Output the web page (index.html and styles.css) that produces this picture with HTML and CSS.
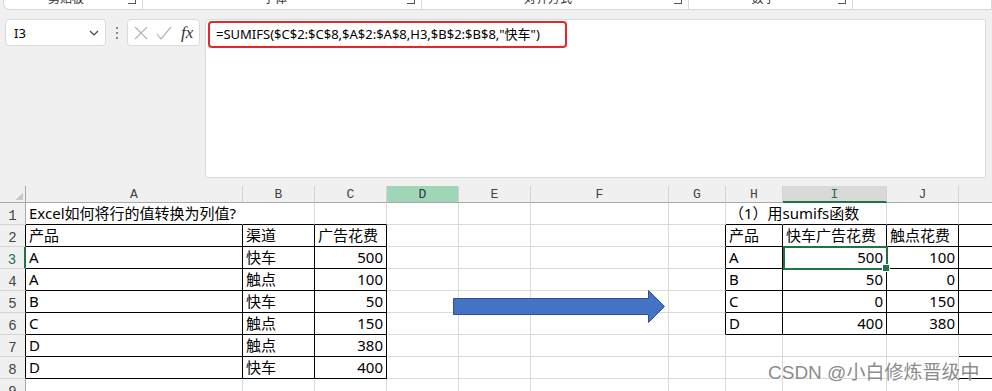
FILE: index.html
```html
<!DOCTYPE html>
<html lang="zh-CN">
<head>
    <meta charset="UTF-8">
    <meta name="viewport" content="width=device-width, initial-scale=1.0">
    <title>Excel - SUMIFS</title>
    <link rel="stylesheet" href="styles.css">
</head>
<body>

    <!-- Ribbon (only the bottom edge is on screen) -->
    <div class="ribbon">
        <div class="ribbon-panel">
            <div class="group g1"><span class="group-label">剪贴板</span><span class="launcher"></span></div>
            <div class="group g2"><span class="group-label">字体</span><span class="launcher"></span></div>
            <div class="group g3"><span class="group-label">对齐方式</span><span class="launcher"></span></div>
            <div class="group g4"><span class="group-label">数字</span><span class="launcher"></span></div>
        </div>
    </div>

    <!-- Name box + formula bar -->
    <div class="formula-row">
        <div class="name-box">
            <span>I3</span>
            <svg width="10" height="6" viewBox="0 0 10 6"><path d="M1 1l4 4 4-4" fill="none" stroke="#444" stroke-width="1.2"/></svg>
        </div>
        <div class="dots"><i></i><i></i><i></i></div>
        <div class="fx-box">
            <svg width="14" height="14" viewBox="0 0 14 14"><path d="M1 1l12 12M13 1L1 13" stroke="#b4b4b4" stroke-width="1.2"/></svg>
            <svg width="16" height="14" viewBox="0 0 16 14"><path d="M1 8l4 5L15 1" fill="none" stroke="#b4b4b4" stroke-width="1.2"/></svg>
            <span class="fx">fx</span>
        </div>
        <div class="formula-area">
            <div class="formula-text">=SUMIFS($C$2:$C$8,$A$2:$A$8,H3,$B$2:$B$8,"快车")</div>
        </div>
    </div>

    <!-- Worksheet -->
    <div class="sheet">
        <div id="grid" class="grid"></div>
        <svg class="arrow" width="214" height="34" viewBox="0 0 214 34">
            <polygon points="0.5,8.5 195.5,8.5 195.5,0.5 211.5,16.5 195.5,32.5 195.5,24.5 0.5,24.5" fill="#4472c4" stroke="#2f528f" stroke-width="1"/>
        </svg>
        <div class="watermark">CSDN @小白修炼晋级中</div>
    </div>

    <script>
        const columns = ['', 'A', 'B', 'C', 'D', 'E', 'F', 'G', 'H', 'I', 'J', ''];

        // cell values keyed by row, then column letter
        const data = {
            1: { A: 'Excel如何将行的值转换为列值?', H: '（1）用sumifs函数' },
            2: { A: '产品', B: '渠道', C: '广告花费', H: '产品', I: '快车广告花费', J: '触点花费' },
            3: { A: 'A', B: '快车', C: 500, H: 'A', I: 500, J: 100 },
            4: { A: 'A', B: '触点', C: 100, H: 'B', I: 50, J: 0 },
            5: { A: 'B', B: '快车', C: 50, H: 'C', I: 0, J: 150 },
            6: { A: 'C', B: '触点', C: 150, H: 'D', I: 400, J: 380 },
            7: { A: 'D', B: '触点', C: 380 },
            8: { A: 'D', B: '快车', C: 400 },
            9: {}
        };

        // bordered ranges: A2:C8 and H2:J6
        function inTable(col, row) {
            if ('ABC'.includes(col) && row >= 2 && row <= 8) return true;
            if ('HIJ'.includes(col) && row >= 2 && row <= 6) return true;
            return false;
        }

        const grid = document.getElementById('grid');

        function addCell(className, text) {
            const cell = document.createElement('div');
            cell.className = className;
            if (text !== undefined) cell.textContent = text;
            grid.appendChild(cell);
            return cell;
        }

        // header row
        columns.forEach((col, i) => {
            if (i === 0) {
                addCell('corner');
                return;
            }
            let cls = 'ch';
            if (col === 'D') cls += ' ch-green';
            if (col === 'I') cls += ' ch-active';
            addCell(cls, col);
        });

        for (let row = 1; row <= 9; row++) {
            columns.forEach((col, i) => {
                if (i === 0) {
                    let cls = 'rh';
                    if (row === 3) cls += ' rh-active';
                    if ((row >= 2 && row <= 8)) cls += ' edge-r';
                    addCell(cls, row);
                    return;
                }
                const value = data[row][col];
                let cls = 'cell';
                if (typeof value === 'number') cls += ' num';
                if (inTable(col, row)) cls += ' boxed';
                // borders that touch a table from the left or above
                const next = columns[i + 1];
                if (next && !inTable(col, row) && inTable(next, row)) cls += ' edge-r';
                if (!inTable(col, row) && inTable(col, row + 1)) cls += ' edge-b';
                if (row === 1 && (col === 'A' || col === 'H')) cls += ' spill';
                if (row === 3 && col === 'I') cls += ' selected';
                addCell(cls, value);
            });
        }
    </script>

</body>
</html>
```

FILE: styles.css
```css
* {
    box-sizing: border-box;
    margin: 0;
    padding: 0;
}

body {
    width: 992px;
    height: 391px;
    overflow: hidden;
    background-color: #f0f0f0;
    font-family: 'Noto Sans', 'Noto Sans CJK SC', sans-serif;
    color: #000;
}

/* Ribbon */
.ribbon {
    height: 10px;
    padding-left: 3px;
}

.ribbon-panel {
    height: 10px;
    display: flex;
    background-color: #ffffff;
    border: 1px solid #d8d8d8;
    border-top: none;
    border-radius: 0 0 0 7px;
    overflow: hidden;
}

.group {
    display: flex;
    align-items: flex-start;
    border-right: 1px solid #d8d8d8;
}

.g1 { width: 139px; }
.g2 { width: 279px; }
.g3 { width: 267px; }
.g4 { width: 164px; }

.group-label {
    flex: 1;
    text-align: center;
    font-size: 12px;
    line-height: 12px;
    margin-top: -7px;
    color: #333;
}

.launcher {
    width: 8px;
    height: 8px;
    margin: -4px 6px 0 0;
    border-right: 1px solid #555;
    border-bottom: 1px solid #555;
}

/* Formula bar */
.formula-row {
    height: 176px;
    display: flex;
    align-items: flex-start;
    padding: 9px 6px 8px 5px;
}

.name-box {
    width: 101px;
    height: 27px;
    display: flex;
    align-items: center;
    justify-content: space-between;
    padding: 0 6px 0 8px;
    background-color: #ffffff;
    border: 1px solid #dadada;
    border-radius: 4px;
    font-size: 13px;
}

.dots {
    width: 21px;
    height: 27px;
    display: flex;
    flex-direction: column;
    align-items: center;
    justify-content: center;
    gap: 3px;
}

.dots i {
    width: 2px;
    height: 2px;
    background-color: #888;
}

.fx-box {
    width: 73px;
    height: 27px;
    display: flex;
    align-items: center;
    gap: 8px;
    padding-left: 6px;
    background-color: #ffffff;
    border: 1px solid #dadada;
    border-radius: 4px;
}

.fx {
    font-family: 'Liberation Serif', serif;
    font-style: italic;
    font-size: 17px;
    color: #333;
    margin-left: 1px;
}

.formula-area {
    flex: 1;
    height: 159px;
    margin-left: 5px;
    padding: 1px 2px;
    background-color: #ffffff;
    border: 1px solid #dadada;
    border-radius: 4px 0 0 4px;
}

.formula-text {
    width: 359px;
    height: 27px;
    padding-left: 6px;
    border: 2px solid #e5262b;
    border-radius: 4px;
    font-size: 13px;
    line-height: 22px;
    white-space: nowrap;
}

/* Worksheet */
.sheet {
    position: relative;
    height: 205px;
    overflow: hidden;
    background-color: #ffffff;
}

.grid {
    display: grid;
    grid-template-columns: 26px 217px 72px 72px 72px 72px 138px 57px 57px 104px 72px 40px;
    grid-template-rows: 17px;
    grid-auto-rows: 22px;
}

.corner {
    background-color: #f0f0f0;
    border-right: 1px solid #a8a8a8;
    border-bottom: 1px solid #a8a8a8;
    background-image: linear-gradient(135deg, transparent 62%, #c9c9c9 62%);
    background-size: 10px 10px;
    background-position: 13px 4px;
    background-repeat: no-repeat;
}

.ch {
    background-color: #f0f0f0;
    border-right: 1px solid #d4d4d4;
    border-bottom: 1px solid #a8a8a8;
    text-align: center;
    font-family: 'Liberation Mono', monospace;
    font-size: 13px;
    line-height: 17px;
    color: #444;
}

.ch-green {
    background-color: #a0d6b8;
    color: #333;
}

.ch-active {
    background-color: #d9d9d9;
    border-bottom: 2px solid #217346;
    color: #217346;
}

.rh {
    background-color: #f0f0f0;
    border-right: 1px solid #a8a8a8;
    border-bottom: 1px solid #d4d4d4;
    text-align: center;
    font-family: 'Liberation Mono', monospace;
    font-size: 14px;
    line-height: 22px;
    padding-top: 2px;
    color: #444;
}

.rh-active {
    color: #217346;
    border-right: 2px solid #217346 !important;
}

.cell {
    border-right: 1px solid #dadada;
    border-bottom: 1px solid #dadada;
    padding: 0 3px;
    font-size: 15px;
    line-height: 21px;
    white-space: nowrap;
}

.num {
    text-align: right;
}

.boxed {
    border-right-color: #000;
    border-bottom-color: #000;
}

.edge-r {
    border-right-color: #000;
}

.edge-b {
    border-bottom-color: #000;
}

.spill {
    border-right-color: transparent;
}

.selected {
    position: relative;
}

.selected::after {
    content: '';
    position: absolute;
    left: 0;
    top: -1px;
    right: -2px;
    bottom: -2px;
    border: 2px solid #217346;
}

.selected::before {
    content: '';
    position: absolute;
    right: -4px;
    bottom: -4px;
    width: 6px;
    height: 6px;
    background-color: #217346;
    border: 1px solid #ffffff;
    z-index: 1;
}

.arrow {
    position: absolute;
    left: 453px;
    top: 104px;
}

.watermark {
    position: absolute;
    left: 768px;
    top: 171px;
    font-family: 'Liberation Sans', 'Noto Sans CJK SC', sans-serif;
    font-size: 19px;
    color: #8c8c8c;
    text-shadow: 0 0 2px #ffffff;
}
```
